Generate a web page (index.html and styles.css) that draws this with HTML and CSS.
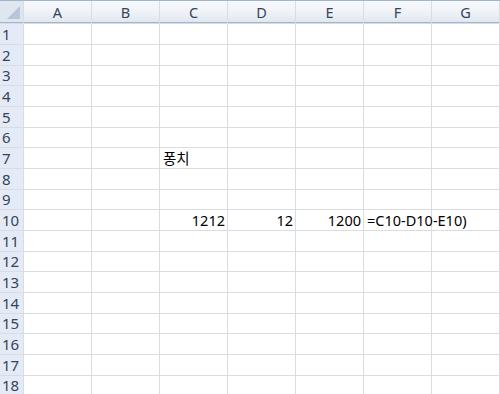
FILE: index.html
```html
<!DOCTYPE html>
<html lang="ko">
<head>
    <meta charset="UTF-8">
    <title>Sheet1</title>
    <link rel="stylesheet" href="styles.css">
</head>
<body>
    <div class="sheet" id="sheet">
        <div class="corner"><span class="corner-mark"></span></div>
    </div>

    <script>
        // Cells that hold a value, keyed by address
        const values = {
            C7: { text: '퐁치', align: 'left' },
            C10: { text: '1212', align: 'right' },
            D10: { text: '12', align: 'right' },
            E10: { text: '1200', align: 'right' },
            F10: { text: '=C10-D10-E10)', align: 'left' }
        };
        const cols = ['A', 'B', 'C', 'D', 'E', 'F', 'G'];
        const sheet = document.getElementById('sheet');

        // Column headers
        cols.forEach(col => {
            const head = document.createElement('div');
            head.className = 'col-head';
            head.textContent = col;
            sheet.appendChild(head);
        });

        // Rows
        for (let r = 1; r <= 18; r++) {
            const rowHead = document.createElement('div');
            rowHead.className = 'row-head';
            rowHead.textContent = r;
            sheet.appendChild(rowHead);

            cols.forEach(col => {
                const cell = document.createElement('div');
                cell.className = 'cell';
                const v = values[col + r];
                if (v) {
                    cell.textContent = v.text;
                    cell.classList.add(v.align === 'right' ? 'num' : 'txt');
                }
                sheet.appendChild(cell);
            });
        }
    </script>
</body>
</html>
```

FILE: styles.css
```css
:root {
    --grid-color: #d9dce1;
    --head-border: #9eb6ce;
    --head-text: #34455a;
}

* {
    margin: 0;
    padding: 0;
    box-sizing: border-box;
}

body {
    width: 500px;
    height: 394px;
    overflow: hidden;
    background: white;
    font-family: 'Noto Sans', 'Noto Sans CJK KR', sans-serif;
}

.sheet {
    display: grid;
    grid-template-columns: 23px repeat(7, 67px);
    grid-template-rows: 22px repeat(6, 20px 20px 19px);
    gap: 1px;
    background: var(--grid-color);
    width: 520px;
    border-top: 1px solid var(--head-border);
}

.corner {
    position: relative;
    background: #dfe6ef;
    border-bottom: 1px solid var(--head-border);
}

.corner-mark {
    position: absolute;
    right: 3px;
    bottom: 3px;
    width: 0;
    height: 0;
    border-left: 13px solid transparent;
    border-bottom: 13px solid #b7c6d8;
}

.col-head {
    display: flex;
    align-items: center;
    justify-content: center;
    background: linear-gradient(#f7f9fc 0%, #eef2f7 55%, #e1e7f0 100%);
    border-bottom: 1px solid var(--head-border);
    font-size: 14.5px;
    color: var(--head-text);
    padding-top: 1px;
}

.row-head {
    display: flex;
    align-items: center;
    padding-left: 2px;
    background: #e4ebf6;
    font-size: 15px;
    color: var(--head-text);
    line-height: 1;
}

.cell {
    background: white;
    font-size: 14.5px;
    color: #000;
    display: flex;
    align-items: center;
    white-space: nowrap;
    overflow: visible;
    line-height: 1;
}

.cell.num {
    justify-content: flex-end;
    padding-right: 2px;
}

.cell.txt {
    padding-left: 3px;
    position: relative;
    z-index: 1;
}
```
